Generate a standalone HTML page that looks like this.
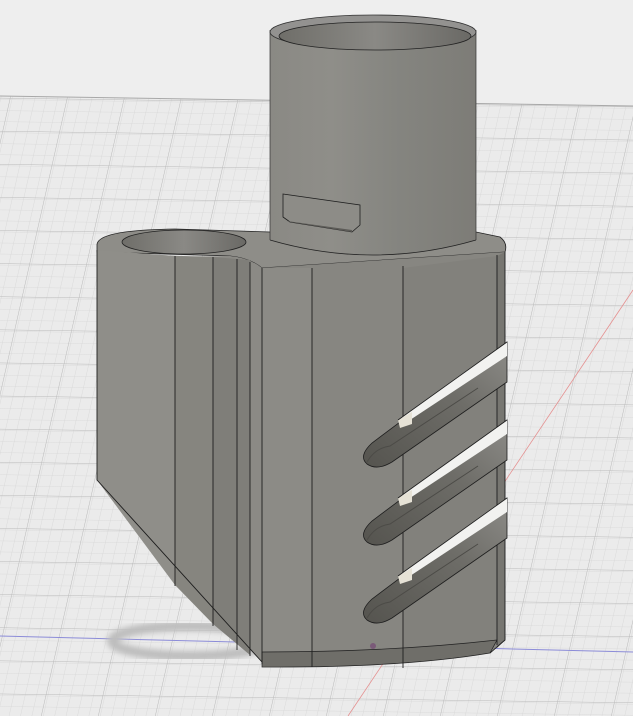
<!DOCTYPE html>
<html><head><meta charset="utf-8"><style>
html,body{margin:0;padding:0;width:633px;height:716px;overflow:hidden;background:#eeeeee}
svg{display:block}
</style></head><body>
<svg width="633" height="716" viewBox="0 0 633 716" xmlns="http://www.w3.org/2000/svg">
<defs>
<pattern id="minor" width="11.4" height="11" patternUnits="userSpaceOnUse" patternTransform="skewX(-12) rotate(0.8)">
<path d="M0 0H11.4M0 0V11" stroke="#d6d6d6" stroke-width="0.8" fill="none"/>
</pattern>
<pattern id="major" width="57" height="33" patternUnits="userSpaceOnUse" patternTransform="translate(10,98) skewX(-12) rotate(0.8)">
<path d="M0 0H57M0 0V33" stroke="#b9b9b9" stroke-width="1" fill="none"/>
</pattern>
<linearGradient id="tube" x1="0" x2="1">
<stop offset="0" stop-color="#8a8984"/><stop offset="0.3" stop-color="#8f8e89"/><stop offset="0.6" stop-color="#858580"/><stop offset="1" stop-color="#7d7c77"/>
</linearGradient>
<linearGradient id="inner" x1="0" x2="1">
<stop offset="0" stop-color="#6f6e69"/><stop offset="0.5" stop-color="#8a8985"/><stop offset="1" stop-color="#6a6965"/>
</linearGradient>
<linearGradient id="slot" x1="0" y1="1" x2="1" y2="0">
<stop offset="0" stop-color="#55544f"/><stop offset="0.6" stop-color="#6e6d68"/><stop offset="1" stop-color="#8d8c88"/>
</linearGradient>
<filter id="blur"><feGaussianBlur stdDeviation="3"/></filter>
</defs>
<rect width="633" height="716" fill="#eeeeee"/>
<polygon points="0,96 633,106 633,716 0,716" fill="#ebebeb"/>
<polygon points="0,96 633,106 633,716 0,716" fill="url(#minor)"/>
<polygon points="0,96 633,106 633,716 0,716" fill="url(#major)"/>
<line x1="0" y1="96" x2="633" y2="106" stroke="#a8a8a8" stroke-width="1"/>
<line x1="0" y1="636" x2="633" y2="652" stroke="#8c8cd8" stroke-width="1"/>
<line x1="348" y1="716" x2="633" y2="290" stroke="#e59090" stroke-width="0.8"/>
<!-- shadow -->
<ellipse cx="190" cy="641" rx="78" ry="15" fill="none" stroke="#bdbdbd" stroke-width="10" filter="url(#blur)"/>
<!-- base top face -->
<path d="M97,245 Q97,230 175,229 L270,232 L476,232 L500,237 Q508,243 505,252 L262,268 Q250,258 230,256 L97,252 Z" fill="#8e8d88" stroke="#222" stroke-width="0.8"/>
<ellipse cx="184" cy="242" rx="62" ry="12" fill="url(#inner)" stroke="#222" stroke-width="0.8"/>
<!-- base front faces -->
<path d="M97,250 Q170,258 230,256 Q250,258 262,268 L262,662 L97,480 Z" fill="#8b8a85"/>
<path d="M97,250 L175,256 L175,585 L97,480 Z" fill="#8f8e89"/>
<path d="M175,256 L213,257 L213,624 L175,585 Z" fill="#86857f"/>
<path d="M213,257 L250,260 L250,655 L213,624 Z" fill="#7f7e79"/>
<path d="M262,268 L505,252 L505,640 L490,652 L262,662 Z" fill="#878681"/>
<path d="M262,268 L312,268 L312,662 L262,662 Z" fill="#8c8b86"/>
<path d="M403,268 L497,256 L497,640 L403,656 Z" fill="#82817c"/>
<path d="M497,256 L505,252 L505,640 L497,648 Z" fill="#777671"/>
<!-- bottom chamfer -->
<path d="M262,652 Q390,652 497,640 L490,653 Q400,668 262,667 Z" fill="#6f6e69" stroke="#222" stroke-width="0.7"/>
<!-- edges -->
<g stroke="#1e1e1e" stroke-width="0.9" fill="none">
<path d="M97,250 L97,480 L262,662"/>
<path d="M175,256 V586 M213,257 V626 M237,259 V650 M250,262 V656 M262,268 V664 M312,268 V667 M403,266 V668 M497,255 V645 M505,252 V640 L490,653"/>
</g>
<!-- slots -->
<g>
<g id="s1">
<path d="M507,342 L372,443 Q358,456 367,464 Q377,471 392,462 L507,382 Z" fill="url(#slot)" stroke="#1e1e1e" stroke-width="0.8"/>
<path d="M507,342 L398,420 L410,420 L507,356 Z" fill="#f2f2f0"/>
<path d="M398,420 L412,412 L412,424 L400,428 Z" fill="#e6e2d6"/>
<path d="M367,462 Q375,448 390,446 L478,388" fill="none" stroke="#4c4b47" stroke-width="1"/>
<path d="M507,342 L398,420" fill="none" stroke="#1e1e1e" stroke-width="0.8"/>
</g>
<use href="#s1" transform="translate(0,78)"/>
<use href="#s1" transform="translate(0,156)"/>
</g>
<!-- dot -->
<circle cx="373" cy="646" r="3" fill="#7a5a78"/>
<!-- tube -->
<path d="M270,30 L270,240 Q373,270 476,240 L476,30 Z" fill="url(#tube)"/>
<path d="M270,240 Q373,270 476,240" fill="none" stroke="#222" stroke-width="0.8"/>
<ellipse cx="373" cy="32" rx="103" ry="17" fill="#939290" stroke="#333" stroke-width="0.8"/>
<ellipse cx="375" cy="36" rx="96" ry="14" fill="url(#inner)" stroke="#222" stroke-width="0.8"/>
<path d="M270,30 V240 M476,30 V240" stroke="#333" stroke-width="0.7" fill="none"/>
<!-- tab -->
<path d="M283,194 L360,205 L360,225 L352,232 L290,222 L283,217 Z" fill="#8d8c87" stroke="#1e1e1e" stroke-width="0.8"/>
<path d="M287,221 L352,230 L352,232 L290,222 Z" fill="#5d5c58"/>
</svg>
</body></html>
